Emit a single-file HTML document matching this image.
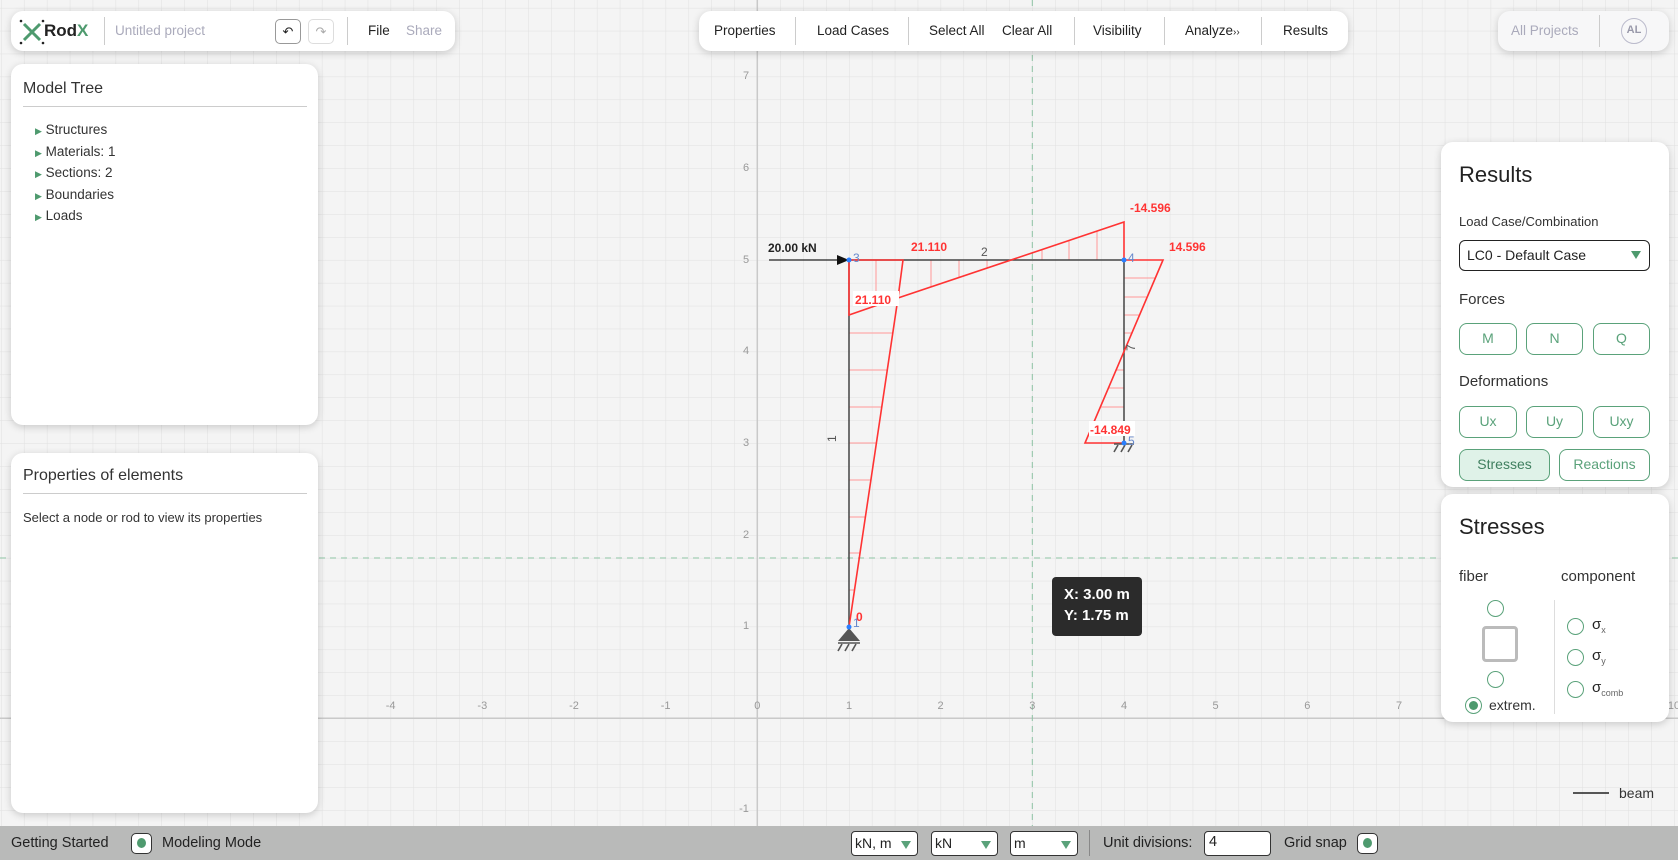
<!DOCTYPE html>
<html><head><meta charset="utf-8"><style>
*{box-sizing:border-box;margin:0;padding:0}
body{width:1678px;height:860px;overflow:hidden;background:#f4f4f4;font-family:"Liberation Sans",sans-serif;color:#222;position:relative}
.card{position:absolute;background:#fff;border-radius:12px;box-shadow:0 2px 8px rgba(0,0,0,.18)}
.abs{position:absolute;white-space:nowrap}
.sep{position:absolute;width:1px;background:#ccc}
.btn{position:absolute;border:1.5px solid #5aa27a;border-radius:8px;color:#5aa27a;font-size:14px;text-align:center;line-height:29px;height:32px;background:#fff}
.rad{position:absolute;width:17px;height:17px;border:1.5px solid #5aa27a;border-radius:50%;background:#fff}
.sel{position:absolute;height:25px;top:831px;background:#fff;border:1.5px solid #333;border-radius:4px;font-size:14px;line-height:22px;padding-left:3px}
.sel:after{content:"";position:absolute;right:6px;top:9px;border-left:5px solid transparent;border-right:5px solid transparent;border-top:8px solid #5aa27a}
</style></head><body>
<svg class="abs" style="left:0;top:0" width="1678" height="860">
<defs><pattern id="g" patternUnits="userSpaceOnUse" x="757.3" y="718.3" width="22.917" height="22.917"><path d="M0 0H22.917M0 0V22.917" stroke="#e0e0e0" stroke-width="1" fill="none"/></pattern></defs>
<rect width="1678" height="860" fill="url(#g)"/>
<line x1="757.3" y1="0" x2="757.3" y2="826" stroke="#c9c9c9" stroke-width="1.5"/>
<line x1="0" y1="718.3" x2="1678" y2="718.3" stroke="#c9c9c9" stroke-width="1.5"/>
<line x1="1032.3" y1="0" x2="1032.3" y2="826" stroke="#8ec4a4" stroke-dasharray="6,5"/>
<line x1="0" y1="558" x2="1678" y2="558" stroke="#8ec4a4" stroke-dasharray="6,5"/>
<g font-size="11" fill="#999" text-anchor="middle">
<text x="390.6" y="709">-4</text><text x="482.3" y="709">-3</text><text x="574" y="709">-2</text><text x="665.6" y="709">-1</text><text x="757.3" y="709">0</text><text x="849" y="709">1</text><text x="940.6" y="709">2</text><text x="1032.3" y="709">3</text><text x="1124" y="709">4</text><text x="1215.6" y="709">5</text><text x="1307.3" y="709">6</text><text x="1399" y="709">7</text><text x="1674" y="709">10</text>
<text x="746" y="79">7</text><text x="746" y="171">6</text><text x="746" y="263">5</text><text x="746" y="354">4</text><text x="746" y="446">3</text><text x="746" y="538">2</text><text x="746" y="629">1</text><text x="744" y="812">-1</text>
</g>
<g stroke="#f99" stroke-width="1">
<line x1="849" y1="333" x2="892.8" y2="333"/><line x1="849" y1="370" x2="887.3" y2="370"/><line x1="849" y1="407" x2="881.8" y2="407"/><line x1="849" y1="443" x2="876.4" y2="443"/><line x1="849" y1="480" x2="870.9" y2="480"/><line x1="849" y1="517" x2="865.4" y2="517"/><line x1="849" y1="553" x2="860" y2="553"/><line x1="849" y1="590" x2="854.5" y2="590"/>
<line x1="876" y1="260" x2="876" y2="305.6"/><line x1="931" y1="260" x2="931" y2="286.9"/><line x1="959" y1="260" x2="959" y2="277.5"/><line x1="987" y1="260" x2="987" y2="268.1"/><line x1="1042" y1="260" x2="1042" y2="249.6"/><line x1="1069" y1="260" x2="1069" y2="240.5"/><line x1="1097" y1="260" x2="1097" y2="231.1"/>
<line x1="1124" y1="278" x2="1155.3" y2="278"/><line x1="1124" y1="297" x2="1147.2" y2="297"/><line x1="1124" y1="315" x2="1139.6" y2="315"/><line x1="1124" y1="333" x2="1131.9" y2="333"/><line x1="1124" y1="370" x2="1116.1" y2="370"/><line x1="1124" y1="388" x2="1108.4" y2="388"/><line x1="1124" y1="407" x2="1100.3" y2="407"/><line x1="1124" y1="425" x2="1092.7" y2="425"/>
</g>
<g stroke="#444" stroke-width="1.5" fill="none">
<line x1="849" y1="627" x2="849" y2="260"/><line x1="849" y1="260" x2="1124" y2="260"/><line x1="1124" y1="260" x2="1124" y2="443"/>
</g>
<line x1="769" y1="260" x2="845" y2="260" stroke="#222" stroke-width="1.2"/>
<path d="M837 255L849 260L837 265Z" fill="#111"/>
<g stroke="#f33" stroke-width="1.6" fill="none">
<path d="M849 627L898 298L1124 222L1124 260"/>
<path d="M849 260L849 315L898 298"/>
<path d="M849 260L903 260L898 298"/>
<path d="M1124 260L1163 260L1085 443L1124 443"/>
</g>
<path d="M849 628L838 641H860Z" fill="#555"/>
<g stroke="#555" stroke-width="1.6"><line x1="838" y1="643" x2="860" y2="643"/><line x1="842" y1="644" x2="838" y2="651"/><line x1="849" y1="644" x2="845" y2="651"/><line x1="856" y1="644" x2="852" y2="651"/>
<line x1="1114" y1="444" x2="1134" y2="444"/><line x1="1118" y1="445" x2="1114" y2="452"/><line x1="1125" y1="445" x2="1121" y2="452"/><line x1="1132" y1="445" x2="1128" y2="452"/></g>
<g fill="#2a7fff"><circle cx="849" cy="260" r="2.5"/><circle cx="1124" cy="260" r="2.5"/><circle cx="849" cy="627" r="2.5"/><circle cx="1124" cy="443" r="2.5"/></g>
<g font-size="12" font-weight="bold">
<rect x="853" y="291" width="46" height="15" fill="#fff"/><rect x="1089" y="421" width="46" height="15" fill="#fff"/>
<text x="768" y="252" fill="#222">20.00 kN</text>
<text x="911" y="251" fill="#f33">21.110</text>
<text x="855" y="304" fill="#f33">21.110</text>
<text x="1130" y="212" fill="#f33">-14.596</text>
<text x="1169" y="251" fill="#f33">14.596</text>
<text x="1090" y="434" fill="#f33">-14.849</text>
<text x="856" y="621" fill="#f33">0</text>
</g>
<g font-size="12" fill="#6688cc"><text x="853" y="262">3</text><text x="1128" y="262">4</text><text x="1128" y="445">5</text><text x="853" y="627">1</text></g>
<g font-size="12" fill="#555"><text x="981" y="256">2</text><text x="0" y="0" transform="translate(836,442) rotate(-90)">1</text><text x="0" y="0" transform="translate(1135,351) rotate(-90)">7</text></g>
<line x1="1573" y1="793" x2="1609" y2="793" stroke="#222" stroke-width="1.5"/>
<text x="1619" y="798" font-size="14" fill="#333">beam</text>
</svg>

<div class="abs" style="left:1052px;top:577px;width:90px;height:59px;background:#2b2b2b;border-radius:4px;color:#fff;font-size:15px;font-weight:bold;padding:7px 0 0 12px;line-height:21px">X: 3.00 m<br>Y: 1.75 m</div>

<div class="card" style="left:11px;top:11px;width:444px;height:40px">
 <svg class="abs" style="left:8px;top:8px" width="26" height="26"><path d="M5 5L21 21M21 5L5 21" stroke="#4e9a6e" stroke-width="3"/><g fill="#222"><circle cx="2" cy="2" r="1.3"/><circle cx="24" cy="2" r="1.3"/><circle cx="2" cy="24" r="1.3"/><circle cx="24" cy="24" r="1.3"/></g></svg>
 <div class="abs" style="left:33px;top:10px;font-size:17px;font-weight:bold;color:#222">Rod<span style="color:#4e9a6e">X</span></div>
 <div class="sep" style="left:93px;top:6px;height:28px"></div>
 <div class="abs" style="left:104px;top:12px;font-size:13.5px;color:#aab">Untitled project</div>
 <div class="abs" style="left:264px;top:8px;width:26px;height:25px;border:1px solid #999;border-radius:5px;text-align:center;font-size:13px;line-height:23px">↶</div>
 <div class="abs" style="left:297px;top:8px;width:26px;height:25px;border:1px solid #ddd;border-radius:5px;text-align:center;font-size:13px;line-height:23px;color:#aaa">↷</div>
 <div class="sep" style="left:336px;top:6px;height:28px"></div>
 <div class="abs" style="left:357px;top:12px;font-size:13.5px">File</div>
 <div class="abs" style="left:395px;top:12px;font-size:13.5px;color:#aab">Share</div>
</div>

<div class="card" style="left:699px;top:11px;width:649px;height:40px;font-size:13.5px">
 <div class="abs" style="left:15px;top:12px">Properties</div><div class="sep" style="left:96px;top:6px;height:28px"></div>
 <div class="abs" style="left:118px;top:12px">Load Cases</div><div class="sep" style="left:209px;top:6px;height:28px"></div>
 <div class="abs" style="left:230px;top:12px">Select All</div>
 <div class="abs" style="left:303px;top:12px">Clear All</div><div class="sep" style="left:375px;top:6px;height:28px"></div>
 <div class="abs" style="left:394px;top:12px">Visibility</div><div class="sep" style="left:465px;top:6px;height:28px"></div>
 <div class="abs" style="left:486px;top:12px">Analyze<span style="font-size:10px">››</span></div><div class="sep" style="left:562px;top:6px;height:28px"></div>
 <div class="abs" style="left:584px;top:12px">Results</div>
</div>

<div class="card" style="left:1498px;top:11px;width:171px;height:40px;background:#f7f7f8">
 <div class="abs" style="left:13px;top:12px;font-size:13.5px;color:#aab">All Projects</div>
 <div class="sep" style="left:101px;top:4px;height:32px"></div>
 <div class="abs" style="left:123px;top:7px;width:26px;height:26px;border:1.5px solid #bbc;border-radius:50%;font-size:11px;font-weight:bold;color:#99a;text-align:center;line-height:23px">AL</div>
</div>

<div class="card" style="left:11px;top:64px;width:307px;height:361px">
 <div class="abs" style="left:12px;top:16px;font-size:16px;color:#333">Model Tree</div>
 <div class="abs" style="left:12px;top:42px;width:284px;height:1px;background:#ccc"></div>
 <div class="abs" style="left:24px;top:56px;font-size:13.5px;line-height:20.5px;color:#333">
 <div><span style="color:#4e9a6e;font-size:9px">▶</span> Structures</div><div><span style="color:#4e9a6e;font-size:9px">▶</span> Materials: 1</div><div><span style="color:#4e9a6e;font-size:9px">▶</span> Sections: 2</div><div><span style="color:#4e9a6e;font-size:9px">▶</span> Boundaries</div><div><span style="color:#4e9a6e;font-size:9px">▶</span> Loads</div></div>
</div>

<div class="card" style="left:11px;top:453px;width:307px;height:360px">
 <div class="abs" style="left:12px;top:14px;font-size:16px;color:#333">Properties of elements</div>
 <div class="abs" style="left:12px;top:40px;width:284px;height:1px;background:#ccc"></div>
 <div class="abs" style="left:12px;top:57px;font-size:13px;color:#333">Select a node or rod to view its properties</div>
</div>

<div class="card" style="left:1441px;top:142px;width:228px;height:345px">
 <div class="abs" style="left:18px;top:20px;font-size:22px;color:#222">Results</div>
 <div class="abs" style="left:18px;top:72px;font-size:13px;color:#333">Load Case/Combination</div>
 <div class="abs" style="left:18px;top:98px;width:191px;height:31px;border:1.5px solid #222;border-radius:6px;font-size:14px;padding:6px 0 0 7px">LC0 - Default Case<span style="position:absolute;right:8px;top:10px;border-left:5px solid transparent;border-right:5px solid transparent;border-top:8px solid #4e9a6e"></span></div>
 <div class="abs" style="left:18px;top:149px;font-size:15px;color:#333">Forces</div>
 <div class="btn" style="left:18px;top:181px;width:58px">M</div><div class="btn" style="left:85px;top:181px;width:57px">N</div><div class="btn" style="left:152px;top:181px;width:57px">Q</div>
 <div class="abs" style="left:18px;top:231px;font-size:15px;color:#333">Deformations</div>
 <div class="btn" style="left:18px;top:264px;width:58px">Ux</div><div class="btn" style="left:85px;top:264px;width:57px">Uy</div><div class="btn" style="left:152px;top:264px;width:57px">Uxy</div>
 <div class="btn" style="left:18px;top:307px;width:91px;background:#dff2e8;color:#3f7f5f">Stresses</div><div class="btn" style="left:118px;top:307px;width:91px">Reactions</div>
</div>

<div class="card" style="left:1441px;top:494px;width:228px;height:228px">
 <div class="abs" style="left:18px;top:20px;font-size:22px;color:#222">Stresses</div>
 <div class="abs" style="left:18px;top:74px;font-size:15px;color:#333">fiber</div>
 <div class="abs" style="left:120px;top:74px;font-size:15px;color:#333">component</div>
 <div class="rad" style="left:46px;top:106px"></div>
 <div class="abs" style="left:41px;top:132px;width:36px;height:36px;border:3px solid #bbb;border-radius:4px"></div>
 <div class="rad" style="left:46px;top:177px"></div>
 <div class="rad" style="left:24px;top:203px"><div style="position:absolute;left:2.5px;top:2.5px;width:9px;height:9px;border-radius:50%;background:#4e9a6e"></div></div>
 <div class="abs" style="left:48px;top:203px;font-size:14px;color:#333">extrem.</div>
 <div class="abs" style="left:113px;top:106px;width:1px;height:114px;background:#ddd"></div>
 <div class="rad" style="left:126px;top:124px"></div><div class="abs" style="left:151px;top:122px;font-size:15px">σ<sub style="font-size:9px;color:#666">x</sub></div>
 <div class="rad" style="left:126px;top:155px"></div><div class="abs" style="left:151px;top:153px;font-size:15px">σ<sub style="font-size:9px;color:#666">y</sub></div>
 <div class="rad" style="left:126px;top:187px"></div><div class="abs" style="left:151px;top:185px;font-size:15px">σ<sub style="font-size:9px;color:#666">comb</sub></div>
</div>

<div class="abs" style="left:0;top:826px;width:1678px;height:34px;background:#b9bab9;font-size:14.5px;color:#222">
 <div class="abs" style="left:11px;top:9px">Getting Started</div>
 <div class="abs" style="left:131px;top:7px;width:21px;height:21px;background:#fff;border:1.5px solid #333;border-radius:5px"><div style="position:absolute;left:4.5px;top:4px;width:9px;height:10px;border-radius:50%;background:#4e9a6e"></div></div>
 <div class="abs" style="left:162px;top:9px">Modeling Mode</div>
 <div class="abs" style="left:1089px;top:4px;width:1px;height:26px;background:#888"></div>
 <div class="abs" style="left:1103px;top:9px">Unit divisions:</div>
 <div class="abs" style="left:1204px;top:5px;width:67px;height:25px;background:#fff;border:1.5px solid #333;border-radius:4px;padding:2px 4px">4</div>
 <div class="abs" style="left:1284px;top:9px">Grid snap</div>
 <div class="abs" style="left:1357px;top:7px;width:21px;height:21px;background:#fff;border:1.5px solid #333;border-radius:5px"><div style="position:absolute;left:4.5px;top:4px;width:9px;height:10px;border-radius:50%;background:#4e9a6e"></div></div>
</div>
<div class="sel" style="left:851px;width:67px">kN, m</div>
<div class="sel" style="left:931px;width:67px">kN</div>
<div class="sel" style="left:1010px;width:68px">m</div>
</body></html>
